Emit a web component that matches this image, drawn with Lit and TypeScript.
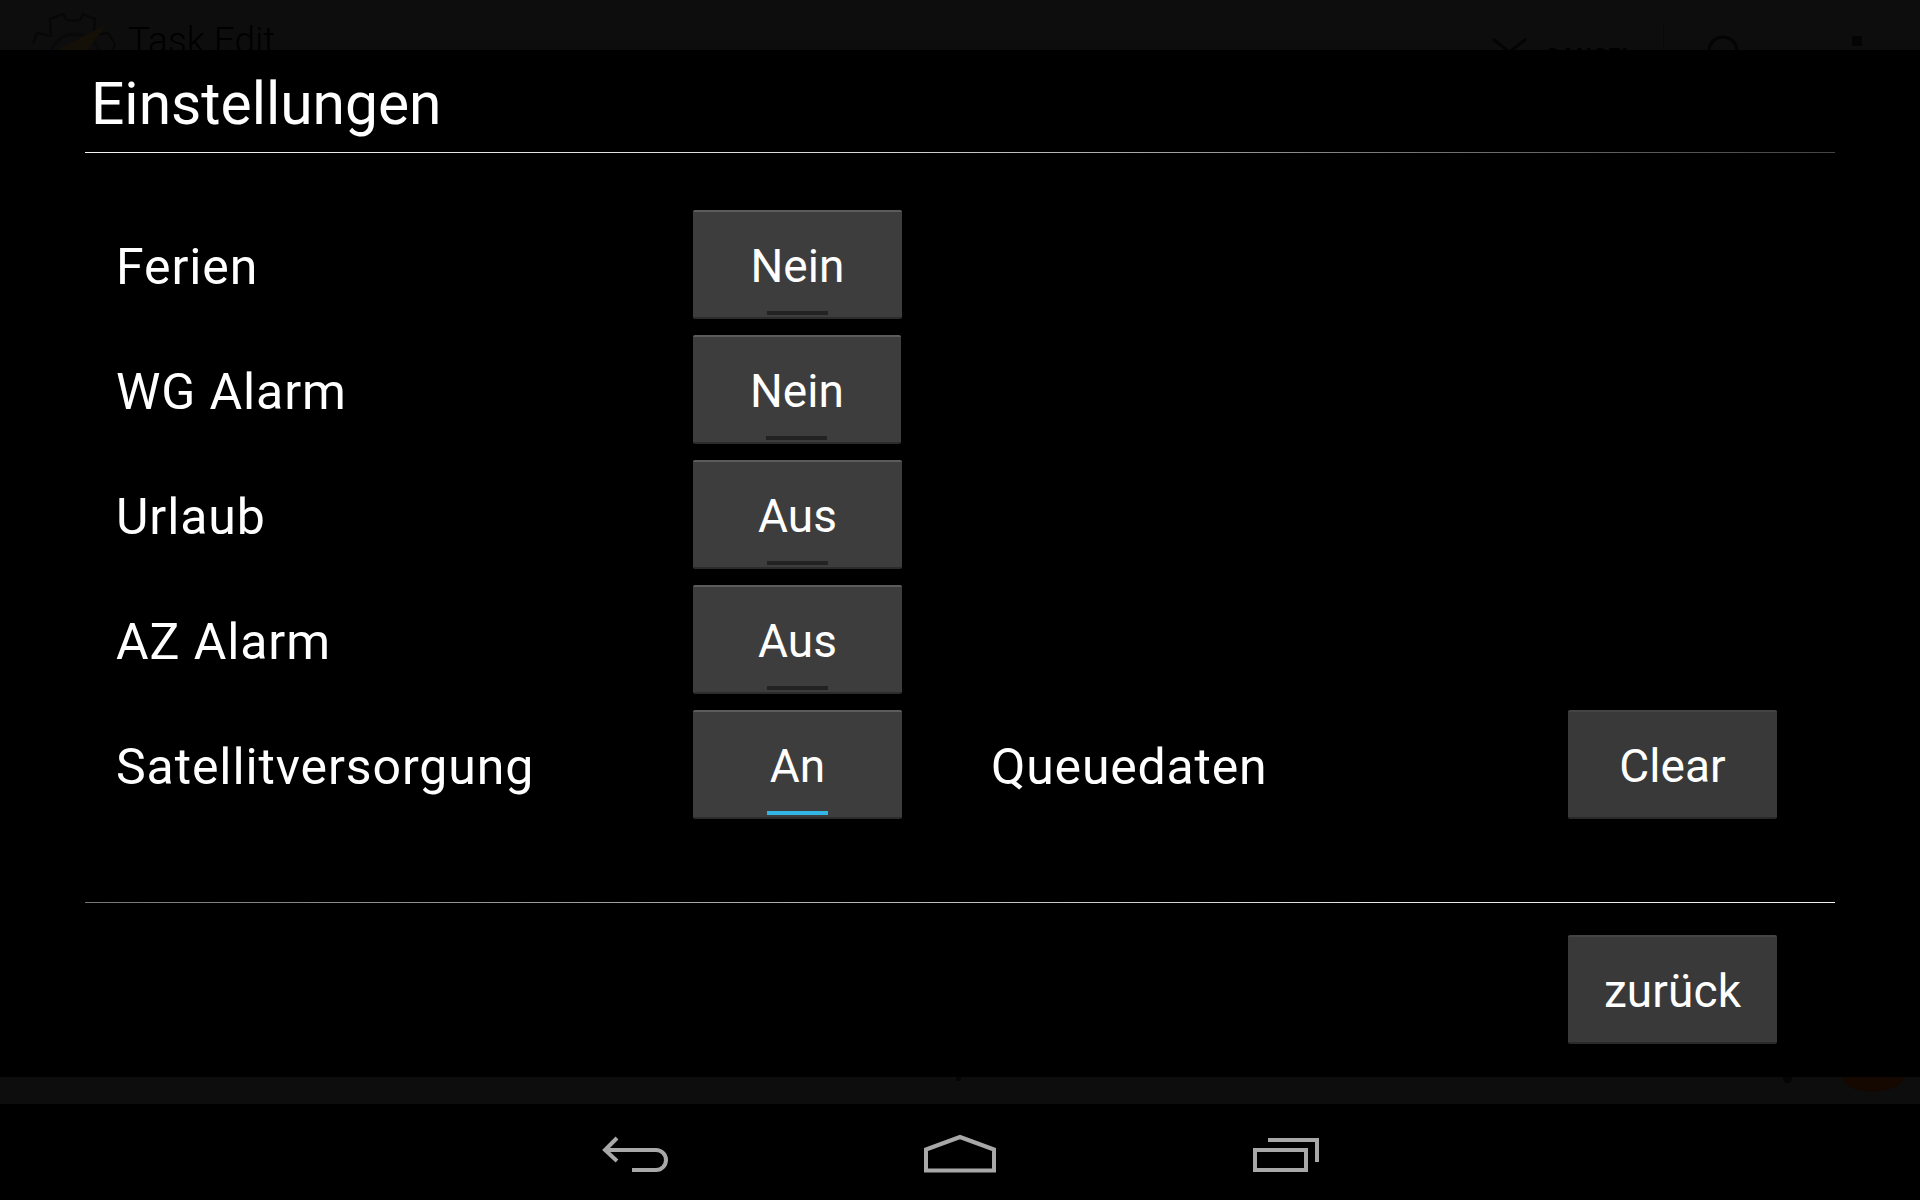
import { LitElement, html, css } from "lit";
import { customElement } from "lit/decorators.js";

const rows = [
  { label: "Ferien", value: "Nein", w: 209 },
  { label: "WG Alarm", value: "Nein", w: 208 },
  { label: "Urlaub", value: "Aus", w: 209 },
  { label: "AZ Alarm", value: "Aus", w: 209 },
];

@customElement("app-root")
export class AppRoot extends LitElement {
  static styles = css`
    :host { display: block; width: 1920px; height: 1200px; background: #000; color: #fff; font-family: Roboto, "Liberation Sans", sans-serif; overflow: hidden; }
    .ghost-top { height: 50px; background: #0d0d0d; overflow: hidden; display: flex; align-items: flex-start; }
    .ghost-top svg { flex: none; display: block; }
    .ghost-logo { margin: 10px 0 0 30px; }
    .ghost-title { font-size: 37px; line-height: 44px; margin: 19px 0 0 8px; color: #000; font-weight: 300; flex: none; }
    .ghost-spacer { flex: 1; }
    .ghost-x { margin-top: 38px; }
    .ghost-cancel { font-size: 22px; line-height: 26px; margin: 44px 0 0 18px; font-weight: 700; letter-spacing: 1px; color: #000; width: 118px; flex: none; }
    .ghost-sep { width: 1px; height: 50px; margin-top: 24px; background: #090909; flex: none; }
    .ghost-search { margin: 35px 0 0 43px; }
    .ghost-menu { width: 10px; height: 10px; background: #040404; margin: 36px 58px 0 113px; flex: none; }

    .dialog { height: 1027px; background: #000; display: flex; flex-direction: column; padding: 0 85px; box-sizing: border-box; flex: none; }
    .title { height: 102px; box-sizing: border-box; margin: 0; padding: 21px 0 0 6px; font-size: 58.7px; line-height: 66px; font-weight: 400; flex: none; }
    .rule { height: 1px; background: linear-gradient(90deg, #f4f4f4 0%, #d8d8d8 45%, #777 75%, #444 100%); flex: none; }
    .rule-2 { background: linear-gradient(90deg, #777 0%, #a8a8a8 35%, #e8e8e8 75%, #f0f0f0 100%); }
    .rows { display: flex; flex-direction: column; gap: 16px; padding: 57px 0 0 31px; height: 749px; box-sizing: border-box; flex: none; }
    .row { display: flex; align-items: center; height: 109px; flex: none; }
    .label { width: 577px; font-size: 50px; letter-spacing: 0.9px; line-height: 56px; padding-top: 5px; flex: none; }
    .extra { width: 577px; margin-left: 89px; font-size: 50px; letter-spacing: 0.8px; line-height: 56px; padding-top: 5px; flex: none; }
    .btn { width: 209px; height: 109px; flex: none; display: flex; align-items: center; justify-content: center; font-size: 46px; letter-spacing: 0.1px; line-height: 54px; padding-top: 3px; position: relative; background: #3d3d3d; border-radius: 2px; box-sizing: border-box; border-top: 2px solid #5c5c5c; border-bottom: 2px solid #2c2c2c; }
    .btn.flat { background: #393939; border-top-color: #444; border-bottom-color: #2a2a2a; }
    .ind { position: absolute; bottom: 2px; width: 61px; height: 4px; background: #222; }
    .ind.on { background: #33b5e5; }
    .actions { display: flex; justify-content: flex-end; padding: 32px 58px 0 0; flex: none; }

    .ghost-bottom { height: 27px; background: #0d0d0d; overflow: hidden; display: flex; flex: none; padding-left: 956px; box-sizing: border-box; }
    .ghost-tick { width: 5px; height: 4px; background: #050505; flex: none; }
    .ghost-gap { flex: 1; }
    .ghost-dot { width: 9px; height: 6px; background: #050505; border-radius: 0 0 5px 5px; margin-right: 50px; flex: none; }
    .ghost-orange { width: 61px; height: 15px; background: #140800; border-radius: 0 0 50% 50% / 0 0 100% 100%; margin-right: 17px; flex: none; }
    .nav { height: 96px; background: #000; display: flex; justify-content: center; align-items: flex-start; gap: 253px; flex: none; }
    .nav svg { display: block; flex: none; margin-top: 30px; }
  `;

  private button(value: string, on: boolean, w = 209) {
    const left = Math.floor((w - 61) / 2);
    return html`<div class="btn" style="width:${w}px">${value}<span class="ind ${on ? "on" : ""}" style="left:${left}px"></span></div>`;
  }

  render() {
    return html`
      <div class="ghost-top">
        <svg class="ghost-logo" width="90" height="60" viewBox="30 10 90 60" fill="none" stroke="#070707" stroke-width="2">
          <path d="M33 44l4-11 14 3-1-17 13-5 4 6c4 1 9 1 13 0l3-6 12 5-1 16 14-2 7 11-3 8" />
          <circle cx="75" cy="60" r="26" stroke="#090909" stroke-width="3" />
          <path d="M107 24L57 50h30z" fill="#141008" stroke="none" />
        </svg>
        <div class="ghost-title">Task Edit</div>
        <div class="ghost-spacer"></div>
        <svg class="ghost-x" width="35" height="30" viewBox="0 0 35 30" fill="none" stroke="#040404" stroke-width="3"><path d="M1 1l16.500 13L34 1M17.500 14L1 30M17.500 14L34 30" /></svg>
        <div class="ghost-cancel">CANCEL</div>
        <div class="ghost-sep"></div>
        <svg class="ghost-search" width="32" height="30" viewBox="0 0 32 30" fill="none" stroke="#040404" stroke-width="3"><circle cx="16" cy="16" r="14" /></svg>
        <div class="ghost-menu"></div>
      </div>
      <div class="dialog">
        <h1 class="title">Einstellungen</h1>
        <div class="rule"></div>
        <div class="rows">
          ${rows.map((r) => html`<div class="row"><div class="label">${r.label}</div>${this.button(r.value, false, r.w)}</div>`)}
          <div class="row">
            <div class="label">Satellitversorgung</div>
            ${this.button("An", true)}
            <div class="extra">Queuedaten</div>
            <div class="btn flat">Clear</div>
          </div>
        </div>
        <div class="rule rule-2"></div>
        <div class="actions"><div class="btn flat">zurück</div></div>
      </div>
      <div class="ghost-bottom"><div class="ghost-tick"></div><div class="ghost-gap"></div><div class="ghost-dot"></div><div class="ghost-orange"></div></div>
      <div class="nav">
        <svg width="70" height="40" viewBox="2 0 70 40" fill="none" stroke="#a8a8a8" stroke-width="4">
          <path d="M18 4L6 16l12 11" /><path d="M6 16h51a10 10 0 0 1 0 20H33" />
        </svg>
        <svg width="73" height="40" viewBox="1 0 73 40" fill="none" stroke="#a8a8a8" stroke-width="4">
          <path d="M3 36.500V15.500L37 3l34 12.500v21z" />
        </svg>
        <svg width="70" height="40" viewBox="0 0 70 40" fill="none" stroke="#a8a8a8" stroke-width="4">
          <path d="M5 16h51v20H5z" /><path d="M18 6h49v22" />
        </svg>
      </div>
    `;
  }
}
